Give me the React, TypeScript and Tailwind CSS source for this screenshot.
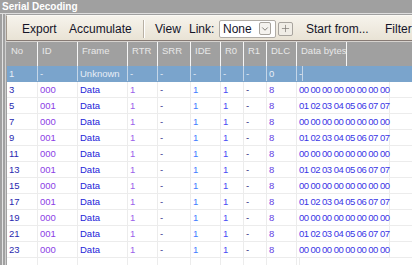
import { ChevronDown, Plus } from 'lucide-react'

// column layout of the decoding grid (widths include the 1px right line)
const COLUMNS = [
  { title: 'No', width: 'w-[31px]', color: 'text-[#2a2ab0]', extra: '' },
  { title: 'ID', width: 'w-[40px]', color: 'text-[#8c3ee6]', extra: '' },
  { title: 'Frame', width: 'w-[50px]', color: 'text-[#2424d8]', extra: '' },
  { title: 'RTR', width: 'w-[30px]', color: 'text-[#9a62ea]', extra: '' },
  { title: 'SRR', width: 'w-[33px]', color: 'text-[#34348c]', extra: '' },
  { title: 'IDE', width: 'w-[30px]', color: 'text-[#3f7cff]', extra: '' },
  { title: 'R0', width: 'w-[23px]', color: 'text-[#4a4cf4]', extra: '' },
  { title: 'R1', width: 'w-[23px]', color: 'text-[#2a2a80]', extra: '' },
  { title: 'DLC', width: 'w-[30px]', color: 'text-[#6442e4]', extra: '' },
  { title: 'Data bytes', width: 'flex-1', color: 'text-[#3a36e6]', extra: 'tracking-[-0.55px]' },
]

const ZEROS = '00 00 00 00 00 00 00 00'
const COUNT = '01 02 03 04 05 06 07 07'

const ROWS: string[][] = [
  ['1', '-', 'Unknown', '-', '-', '-', '-', '-', '0', '-'],
  ...Array.from({ length: 11 }, (_, i) => {
    const odd = i % 2 === 1
    return [String(3 + i * 2), odd ? '001' : '000', 'Data', '1', '-', '1', '1', '-', '8', odd ? COUNT : ZEROS]
  }),
]

function Toolbar() {
  return (
    <div className="flex h-[26px] items-center border-t border-l border-b border-t-[#fbfaf5] border-l-[#a2988c] border-b-[#867a74] bg-gradient-to-b from-[#f6f3ec] to-[#e9e3d5] pl-[15px] pt-[1px] text-[12px] text-[#141428] whitespace-nowrap">
      <span className="w-[47px] flex-none">Export</span>
      <span className="w-[74px] flex-none">Accumulate</span>
      <span className="h-[18px] w-[2px] flex-none border-l border-r border-l-[#b8b0a4] border-r-white" />
      <span className="ml-[10px] w-[34px] flex-none">View</span>
      <span className="w-[30px] flex-none">Link:</span>
      <div className="flex h-[18px] w-[57px] flex-none items-center rounded-[2px] border border-[#b0aca6] bg-white">
        <span className="flex-1 pl-[3px]">None</span>
        <span className="mr-[4px] flex h-[13px] w-[12px] items-center justify-center rounded-[2px] border border-[#a8a49e] bg-[#f4f2ee]">
          <ChevronDown className="h-[10px] w-[10px] text-[#6a6660]" strokeWidth={2} />
        </span>
      </div>
      <span className="ml-[2px] flex h-[14px] w-[15px] flex-none items-center justify-center rounded-[2px] border border-[#a8a49e] bg-[#f0ede6]">
        <Plus className="h-[11px] w-[11px] text-[#7a7670]" strokeWidth={1.5} />
      </span>
      <span className="ml-[13px] w-[79px] flex-none">Start from...</span>
      <span className="flex-none">Filter</span>
    </div>
  )
}

function GridHeader() {
  return (
    <div className="flex h-[24px] bg-[#a0a0a0] pl-[1px] text-[#e8e8e8]">
      {COLUMNS.map((col) => (
        <div
          key={col.title}
          className={`${col.width} flex-none border-r border-[#f6f6f6] pl-[4px] pt-[3px] leading-[11px] whitespace-nowrap`}
        >
          {col.title}
        </div>
      ))}
    </div>
  )
}

function GridRow({ cells, selected }: { cells: string[]; selected?: boolean }) {
  return (
    <div
      className={`flex h-[16px] border-b ${
        selected ? 'border-[#7aa4cc] bg-[#7aa4cc]' : 'border-[#ececec] bg-white'
      }`}
    >
      {COLUMNS.map((col, i) => (
        <div
          key={col.title}
          className={`${col.width} ${col.extra} flex-none flex items-center border-r pl-[2px] pt-[1px] whitespace-nowrap ${
            selected ? 'border-[#c4d6e8] text-[#e8eef6]' : `border-[#ececec] ${col.color}`
          }`}
        >
          {cells[i]}
        </div>
      ))}
    </div>
  )
}

export default function App() {
  return (
    <div className="h-[265px] w-[412px] overflow-hidden bg-[#a0a0a0] font-['Liberation_Sans',Arial,sans-serif]">
      {/* Title */}
      <div className="flex h-[13px] items-center pl-[2px] text-[10px] font-bold text-white">Serial Decoding</div>
      <div className="h-[1px] bg-[#dedede]" />

      <div className="flex">
        {/* left frame lines */}
        <div className="ml-[2px] h-[260px] w-[4px] flex-none border-x border-l-[#e2e2e2] border-r-[#cfcfcf]" />

        <div className="min-w-0 flex-1 pt-[1px]">
          <Toolbar />
          <div className="h-[1px] bg-[#d6d2ce]" />

          <div className="text-[9.5px]">
            <GridHeader />
            <div className="pl-[1px]">
              {ROWS.map((row, i) => (
                <GridRow key={row[0]} cells={row} selected={i === 0} />
              ))}
              <GridRow cells={COLUMNS.map(() => '')} />
            </div>
          </div>
        </div>
      </div>
    </div>
  )
}
